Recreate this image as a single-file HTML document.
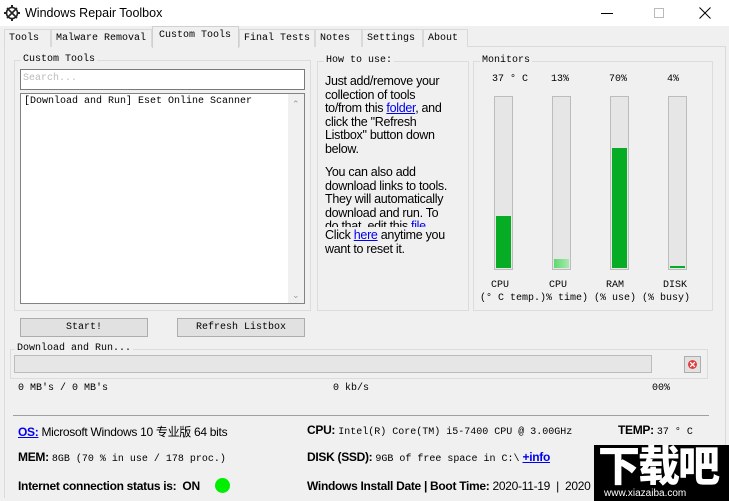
<!DOCTYPE html>
<html><head><meta charset="utf-8"><style>
*{margin:0;padding:0;box-sizing:border-box}
body{width:729px;height:501px;background:#f0f0f0;position:relative;overflow:hidden;font-family:"Liberation Sans","Noto Sans CJK SC",sans-serif;color:#000}
.a{position:absolute}
.m{font-family:"Liberation Mono","Noto Sans CJK SC",monospace;font-size:10px;white-space:nowrap}
.s{font-size:12px;white-space:nowrap;letter-spacing:-0.3px}
.grp{position:absolute;border:1px solid #dcdcdc}
.gl{position:absolute;top:-7px;left:6px;background:#f0f0f0;padding:0 2px}
.tab{position:absolute;top:29px;height:18px;border:1px solid #d9d9d9;border-bottom:none;background:#f0f0f0;padding:3px 0 0 4px}
.bar{position:absolute;top:96px;width:19px;height:174px;background:#e6e6e6;border:1px solid #bcbcbc}
.fill{position:absolute;left:1px;right:1px;bottom:1px;background:#06ad24}
.btn{position:absolute;height:19px;background:#e1e1e1;border:1px solid #adadad;text-align:center;padding-top:3px}
a{color:#0000ee}
.ht{font-size:12.5px;line-height:13.5px;letter-spacing:-0.3px;white-space:nowrap}
</style></head><body>
<div class="a" style="left:0;top:0;width:729px;height:26px;background:#fff"></div>
<svg class="a" style="left:4px;top:5px" width="16" height="16" viewBox="0 0 16 16"><circle cx="8" cy="8" r="5.5" fill="none" stroke="#222" stroke-width="1.6"/><path d="M3 3L13 13M13 3L3 13" stroke="#222" stroke-width="1.6"/><g fill="#222"><rect x="7" y="0" width="2" height="3"/><rect x="7" y="13" width="2" height="3"/><rect x="0" y="7" width="3" height="2"/><rect x="13" y="7" width="3" height="2"/></g></svg>
<div class="a" style="left:25px;top:6px;font-size:12.5px">Windows Repair Toolbox</div>
<div class="a" style="left:601px;top:13px;width:12px;height:1px;background:#000"></div>
<div class="a" style="left:654px;top:8px;width:10px;height:10px;border:1px solid #bbb"></div>
<svg class="a" style="left:699px;top:7px" width="12" height="12"><path d="M0.5 0.5L11.5 11.5M11.5 0.5L0.5 11.5" stroke="#000" stroke-width="1"/></svg>

<div class="a" style="left:4px;top:46px;width:722px;height:452px;border:1px solid #dadada;border-bottom:none"></div>
<div class="tab m" style="left:4px;width:47px">Tools</div>
<div class="tab m" style="left:51px;width:101px">Malware Removal</div>
<div class="tab m" style="left:239px;width:76px">Final Tests</div>
<div class="tab m" style="left:315px;width:47px">Notes</div>
<div class="tab m" style="left:362px;width:61px">Settings</div>
<div class="tab m" style="left:423px;width:45px">About</div>
<div class="tab m" style="left:152px;top:26px;height:22px;width:87px;background:#f0f0f0;border-color:#d0d0d0;padding-top:3px;padding-left:6px">Custom Tools</div>

<div class="grp" style="left:14px;top:60px;width:297px;height:251px"><span class="gl m">Custom Tools</span></div>
<div class="a m" style="left:20px;top:69px;width:285px;height:21px;background:#fff;border:1px solid #7a7a7a;color:#bbb;padding:3px 0 0 2px">Search...</div>
<div class="a m" style="left:20px;top:93px;width:285px;height:211px;background:#fff;border:1px solid #828282;padding:2px 0 0 3px">[Download and Run] Eset Online Scanner</div>
<div class="a" style="left:288px;top:94px;width:16px;height:209px;background:#f0f0f0"></div>
<div class="a" style="left:292px;top:99px;font-size:9px;color:#999">&#8963;</div>
<div class="a" style="left:292px;top:290px;font-size:9px;color:#999">&#8964;</div>

<div class="grp" style="left:317px;top:61px;width:152px;height:250px"><span class="gl m">How to use:</span></div>
<div class="a ht" style="left:325px;top:75px;width:135px;height:152px;overflow:hidden">Just add/remove your<br>collection of tools<br>to/from this <a href="#">folder</a>, and<br>click the "Refresh<br>Listbox" button down<br>below.<br><div style="height:10px"></div>You can also add<br>download links to tools.<br>They will automatically<br>download and run. To<br>do that, edit this <a href="#" style="text-decoration:none">file</a>.</div>
<div class="a ht" style="left:325px;top:229px;width:135px">Click <a href="#">here</a> anytime you<br>want to reset it.</div>

<div class="grp" style="left:473px;top:61px;width:240px;height:250px"><span class="gl m">Monitors</span></div>
<div class="a m" style="left:492px;top:74px">37 ° C</div>
<div class="a m" style="left:551px;top:74px">13%</div>
<div class="a m" style="left:609px;top:74px">70%</div>
<div class="a m" style="left:667px;top:74px">4%</div>
<div class="bar" style="left:494px"><div class="fill" style="height:52px"></div></div>
<div class="bar" style="left:552px"><div class="fill" style="height:9px;background:linear-gradient(90deg,#5fd86f,#a8eab0)"></div></div>
<div class="bar" style="left:610px"><div class="fill" style="height:120px"></div></div>
<div class="bar" style="left:668px"><div class="fill" style="height:2px"></div></div>
<div class="a m" style="left:491px;top:280px">CPU</div>
<div class="a m" style="left:549px;top:280px">CPU</div>
<div class="a m" style="left:606px;top:280px">RAM</div>
<div class="a m" style="left:663px;top:280px">DISK</div>
<div class="a m" style="left:480px;top:293px">(° C temp.)% time) (% use) (% busy)</div>

<div class="btn m" style="left:20px;top:318px;width:128px">Start!</div>
<div class="btn m" style="left:177px;top:318px;width:128px">Refresh Listbox</div>

<div class="grp" style="left:10px;top:349px;width:698px;height:30px"><span class="gl m" style="left:4px">Download and Run...</span></div>
<div class="a" style="left:14px;top:355px;width:638px;height:18px;background:#e6e6e6;border:1px solid #bcbcbc"></div>
<div class="a" style="left:684px;top:356px;width:17px;height:17px;border:1px solid #adadad;background:#e1e1e1"></div>
<div class="a" style="left:688px;top:360px;width:9px;height:9px;border-radius:50%;background:#e04040"></div>
<svg class="a" style="left:690px;top:362px" width="5" height="5"><path d="M0 0L5 5M5 0L0 5" stroke="#fff" stroke-width="1.2"/></svg>

<div class="a m" style="left:18px;top:383px">0 MB's / 0 MB's</div>
<div class="a m" style="left:333px;top:383px">0 kb/s</div>
<div class="a m" style="left:652px;top:383px">00%</div>
<div class="a" style="left:13px;top:415px;width:696px;height:1px;background:#a0a0a0"></div>

<div class="a s" style="left:18px;top:423px"><a href="#" style="font-weight:bold">OS:</a> Microsoft Windows 10 专业版 64 bits</div>
<div class="a s" style="left:307px;top:423px"><b>CPU:</b> <span class="m" style="letter-spacing:0">Intel(R) Core(TM) i5-7400 CPU @ 3.00GHz</span></div>
<div class="a s" style="left:618px;top:423px"><b>TEMP:</b> <span class="m" style="letter-spacing:0">37 ° C</span></div>
<div class="a s" style="left:18px;top:450px"><b>MEM:</b> <span class="m" style="letter-spacing:0">8GB (70 % in use / 178 proc.)</span></div>
<div class="a s" style="left:307px;top:450px"><b>DISK (SSD):</b> <span class="m" style="letter-spacing:0">9GB of free space in C:\</span> <a href="#" style="font-weight:bold">+info</a></div>
<div class="a s" style="left:18px;top:479px"><b>Internet connection status is:&nbsp; ON</b></div>
<div class="a" style="left:215px;top:478px;width:15px;height:15px;border-radius:50%;background:#00ee00"></div>
<div class="a s" style="left:307px;top:479px"><b>Windows Install Date | Boot Time:</b> 2020-11-19 &nbsp;| &nbsp;2020</div>

<div class="a" style="left:594px;top:445px;width:135px;height:56px;background:#000"></div>
<div class="a" style="left:598px;top:440px;color:#fff;font-family:'Noto Sans CJK SC',sans-serif;font-weight:900;font-size:42px;line-height:48px;letter-spacing:-2px">下载吧</div>
<div class="a" style="left:604px;top:488px;color:#fff;font-size:10px">www.xiazaiba.com</div>
</body></html>
